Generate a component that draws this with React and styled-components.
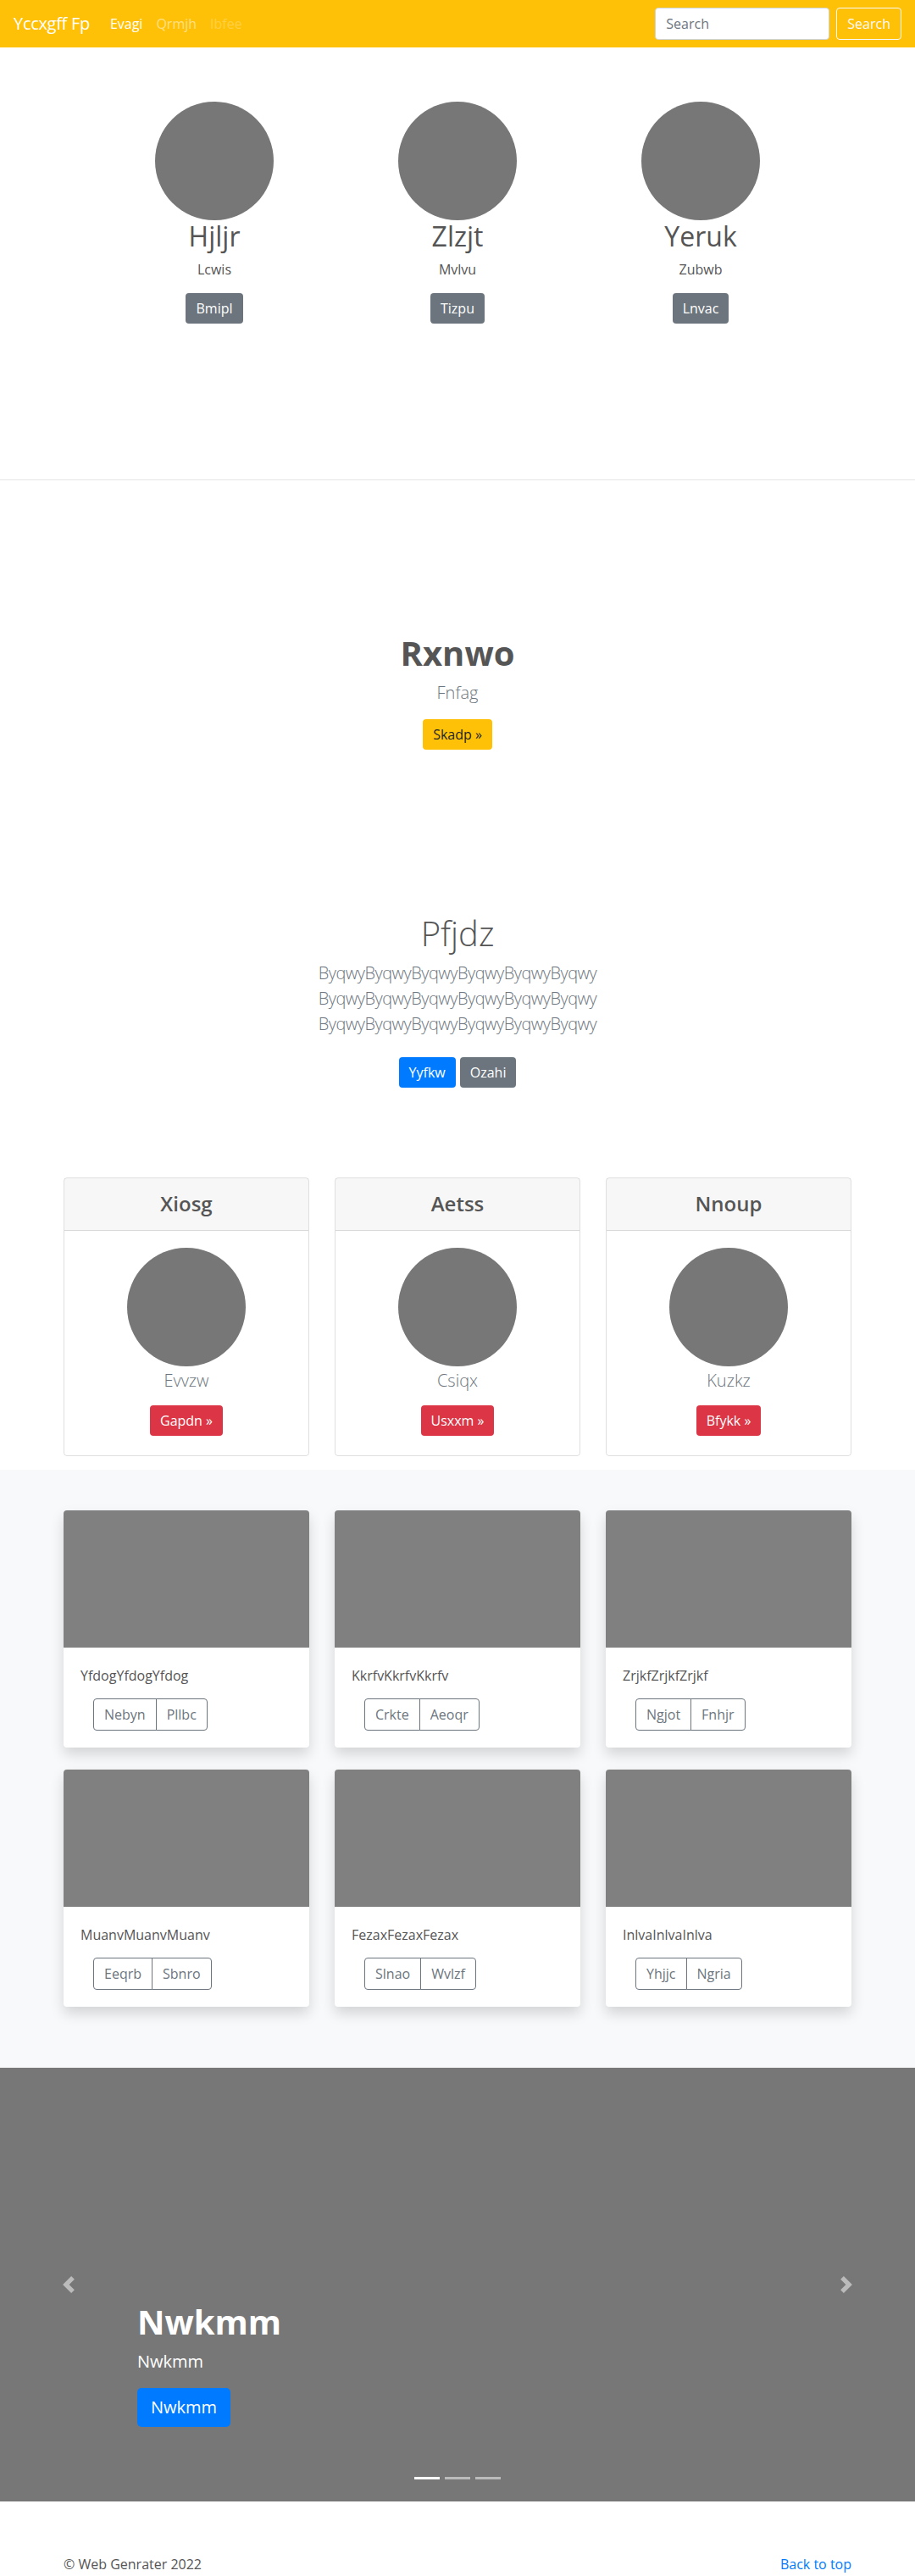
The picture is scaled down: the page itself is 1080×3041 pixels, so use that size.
import React from "react";
import styled, { createGlobalStyle } from "styled-components";

const GlobalStyle = createGlobalStyle`
  * { box-sizing: border-box; }
  body {
    margin: 0;
    font-family: "Open Sans", "Noto Sans", "Liberation Sans", sans-serif;
    font-size: 16px;
    line-height: 1.5;
    color: #555;
    background: #fff;
  }
  h1, h2, h4, p { margin: 0; }
`;

const team = [
  { name: "Hjljr", role: "Lcwis", btn: "Bmipl" },
  { name: "Zlzjt", role: "Mvlvu", btn: "Tizpu" },
  { name: "Yeruk", role: "Zubwb", btn: "Lnvac" },
];

const plans = [
  { title: "Xiosg", sub: "Evvzw", btn: "Gapdn »" },
  { title: "Aetss", sub: "Csiqx", btn: "Usxxm »" },
  { title: "Nnoup", sub: "Kuzkz", btn: "Bfykk »" },
];

const album = [
  { text: "YfdogYfdogYfdog", a: "Nebyn", b: "Pllbc" },
  { text: "KkrfvKkrfvKkrfv", a: "Crkte", b: "Aeoqr" },
  { text: "ZrjkfZrjkfZrjkf", a: "Ngjot", b: "Fnhjr" },
  { text: "MuanvMuanvMuanv", a: "Eeqrb", b: "Sbnro" },
  { text: "FezaxFezaxFezax", a: "Slnao", b: "Wvlzf" },
  { text: "InlvaInlvaInlva", a: "Yhjjc", b: "Ngria" },
];

const App = () => {
  return (
    <>
      <GlobalStyle />
      <Navbar>
        <Brand>Yccxgff Fp</Brand>
        <NavLinks>
          <NavLink $state="active">Evagi</NavLink>
          <NavLink>Qrmjh</NavLink>
          <NavLink $state="disabled">Ibfee</NavLink>
        </NavLinks>
        <SearchForm>
          <SearchInput placeholder="Search" />
          <SearchButton>Search</SearchButton>
        </SearchForm>
      </Navbar>

      <TeamSection>
        <TeamRow>
          {team.map((t) => (
            <TeamCol key={t.name}>
              <Circle />
              <TeamName>{t.name}</TeamName>
              <TeamRole>{t.role}</TeamRole>
              <Button $variant="secondary">{t.btn}</Button>
            </TeamCol>
          ))}
        </TeamRow>
      </TeamSection>

      <HeroSection>
        <HeroTitle>Rxnwo</HeroTitle>
        <Lead>Fnfag</Lead>
        <Button $variant="warning">Skadp »</Button>
      </HeroSection>

      <IntroSection>
        <IntroTitle>Pfjdz</IntroTitle>
        <IntroText>
          ByqwyByqwyByqwyByqwyByqwyByqwy
          <br />
          ByqwyByqwyByqwyByqwyByqwyByqwy
          <br />
          ByqwyByqwyByqwyByqwyByqwyByqwy
        </IntroText>
        <ButtonRow>
          <Button $variant="primary">Yyfkw</Button>
          <Button $variant="secondary">Ozahi</Button>
        </ButtonRow>
      </IntroSection>

      <Container>
        <PlanGrid>
          {plans.map((p) => (
            <PlanCard key={p.title}>
              <PlanHeader>
                <PlanTitle>{p.title}</PlanTitle>
              </PlanHeader>
              <PlanBody>
                <Circle />
                <PlanSub>{p.sub}</PlanSub>
                <Button $variant="danger">{p.btn}</Button>
              </PlanBody>
            </PlanCard>
          ))}
        </PlanGrid>
      </Container>

      <AlbumSection>
        <Container>
          <AlbumGrid>
            {album.map((c) => (
              <AlbumCard key={c.text}>
                <Thumb />
                <AlbumBody>
                  <AlbumText>{c.text}</AlbumText>
                  <BtnGroup>
                    <OutlineBtn>{c.a}</OutlineBtn>
                    <OutlineBtn>{c.b}</OutlineBtn>
                  </BtnGroup>
                </AlbumBody>
              </AlbumCard>
            ))}
          </AlbumGrid>
        </Container>
      </AlbumSection>

      <Carousel>
        <Control $side="left">
          <svg width="20" height="20" viewBox="0 0 8 8" fill="#fff">
            <path d="M5.25 0l-4 4 4 4 1.5-1.5L4.25 4l2.5-2.5L5.25 0z" />
          </svg>
        </Control>
        <Control $side="right">
          <svg width="20" height="20" viewBox="0 0 8 8" fill="#fff">
            <path d="M2.75 0l-1.5 1.5L3.75 4l-2.5 2.5L2.75 8l4-4-4-4z" />
          </svg>
        </Control>
        <Caption>
          <CaptionTitle>Nwkmm</CaptionTitle>
          <CaptionText>Nwkmm</CaptionText>
          <BigButton>Nwkmm</BigButton>
        </Caption>
        <Indicators>
          <Indicator $active />
          <Indicator />
          <Indicator />
        </Indicators>
      </Carousel>

      <Footer>
        <Container>
          <FooterRow>
            <span>© Web Genrater 2022</span>
            <TopLink href="#">Back to top</TopLink>
          </FooterRow>
        </Container>
      </Footer>
    </>
  );
};

export default App;

const Navbar = styled.nav`
  height: 56px;
  background: #ffc107;
  display: flex;
  align-items: center;
  padding: 0 16px;
`;

const Brand = styled.a`
  font-size: 20px;
  color: #fff;
  margin-right: 16px;
  line-height: 30px;
  letter-spacing: -0.3px;
`;

const NavLinks = styled.div`
  display: flex;
  flex: 1;
`;

const NavLink = styled.a`
  padding: 8px;
  color: ${(p) =>
    p.$state === "active"
      ? "#fff"
      : p.$state === "disabled"
      ? "rgba(255,255,255,.25)"
      : "rgba(255,255,255,.5)"};
`;

const SearchForm = styled.form`
  display: flex;
  gap: 8px;
`;

const SearchInput = styled.input`
  width: 206px;
  height: 38px;
  padding: 6px 12px;
  font: inherit;
  color: #495057;
  border: 1px solid #ced4da;
  border-radius: 4px;
  &::placeholder { color: #6c757d; }
`;

const SearchButton = styled.button`
  height: 38px;
  padding: 6px 12px;
  font: inherit;
  color: #f8f9fa;
  background: transparent;
  border: 1px solid #f8f9fa;
  border-radius: 4px;
`;

const colors = {
  primary: ["#007bff", "#fff"],
  secondary: ["#6c757d", "#fff"],
  warning: ["#ffc107", "#212529"],
  danger: ["#dc3545", "#fff"],
};

const Button = styled.a`
  display: inline-block;
  padding: 6px 12px;
  line-height: 24px;
  font-size: 16px;
  border-radius: 4px;
  background: ${(p) => colors[p.$variant][0]};
  color: ${(p) => colors[p.$variant][1]};
`;

const Circle = styled.div`
  width: 140px;
  height: 140px;
  border-radius: 50%;
  background: #777;
`;

const TeamSection = styled.section`
  height: 511px;
  padding-top: 64px;
  border-bottom: 1px solid #e5e5e5;
`;

const TeamRow = styled.div`
  width: 861px;
  margin: 0 auto;
  display: grid;
  grid-template-columns: repeat(3, 1fr);
`;

const TeamCol = styled.div`
  display: flex;
  flex-direction: column;
  align-items: center;
  text-align: center;
`;

const TeamName = styled.h2`
  font-size: 32px;
  font-weight: 400;
  line-height: 1.2;
  margin-bottom: 8px;
`;

const TeamRole = styled.p`
  margin-bottom: 16px;
`;

const HeroSection = styled.section`
  padding-top: 180px;
  display: flex;
  flex-direction: column;
  align-items: center;
`;

const HeroTitle = styled.h1`
  font-size: 40px;
  font-weight: 700;
  line-height: 1.2;
  margin-bottom: 8px;
`;

const Lead = styled.p`
  font-size: 20px;
  font-weight: 300;
  line-height: 1.5;
  color: #6c757d;
  margin-bottom: 16px;
`;

const IntroSection = styled.section`
  padding-top: 193px;
  display: flex;
  flex-direction: column;
  align-items: center;
  text-align: center;
`;

const IntroTitle = styled.h1`
  font-size: 40px;
  font-weight: 300;
  line-height: 1.2;
  margin-bottom: 8px;
`;

const IntroText = styled(Lead)`
  margin-bottom: 24px;
  letter-spacing: -0.5px;
`;

const ButtonRow = styled.div`
  display: flex;
  gap: 5px;
`;

const Container = styled.div`
  width: 960px;
  margin: 0 auto;
  padding: 0 15px;
`;

const PlanGrid = styled.div`
  margin-top: 106px;
  display: grid;
  grid-template-columns: repeat(3, 290px);
  column-gap: 30px;
  padding-bottom: 16px;
`;

const PlanCard = styled.div`
  border: 1px solid rgba(0, 0, 0, 0.125);
  border-radius: 4px;
  height: 329px;
`;

const PlanHeader = styled.div`
  height: 62px;
  background: rgba(0, 0, 0, 0.03);
  border-bottom: 1px solid rgba(0, 0, 0, 0.125);
  display: flex;
  align-items: center;
  justify-content: center;
`;

const PlanTitle = styled.h4`
  font-size: 24px;
  font-weight: 600;
  line-height: 1.2;
`;

const PlanBody = styled.div`
  padding-top: 20px;
  display: flex;
  flex-direction: column;
  align-items: center;
`;

const PlanSub = styled(Lead)`
  line-height: 30px;
  margin: 2px 0 14px;
`;

const AlbumSection = styled.section`
  background: #f8f9fa;
  padding: 48px 0;
`;

const AlbumGrid = styled.div`
  display: grid;
  grid-template-columns: repeat(3, 290px);
  column-gap: 30px;
  row-gap: 26px;
  padding-bottom: 24px;
`;

const AlbumCard = styled.div`
  background: #fff;
  border-radius: 4px;
  overflow: hidden;
  height: 280px;
  box-shadow: 0 8px 16px rgba(0, 0, 0, 0.15);
`;

const Thumb = styled.div`
  height: 162px;
  background: #808080;
`;

const AlbumBody = styled.div`
  padding: 21px 20px 20px;
`;

const AlbumText = styled.p`
  margin-bottom: 15px;
`;

const BtnGroup = styled.div`
  display: inline-flex;
  margin-left: 15px;
`;

const OutlineBtn = styled.button`
  font: inherit;
  height: 38px;
  padding: 6px 12px;
  color: #6c757d;
  background: transparent;
  border: 1px solid #6c757d;
  &:first-child { border-radius: 4px 0 0 4px; }
  &:last-child { border-radius: 0 4px 4px 0; margin-left: -1px; }
`;

const Carousel = styled.section`
  position: relative;
  height: 512px;
  background: #777;
`;

const Control = styled.div`
  position: absolute;
  top: 0;
  bottom: 0;
  ${(p) => p.$side}: 0;
  width: 15%;
  display: flex;
  align-items: center;
  justify-content: center;
  opacity: 0.5;
`;

const Caption = styled.div`
  position: absolute;
  left: 15%;
  right: 15%;
  bottom: 88px;
  color: #fff;
`;

const CaptionTitle = styled.h1`
  font-size: 40px;
  font-weight: 700;
  line-height: 1.2;
  margin-bottom: 8px;
`;

const CaptionText = styled.p`
  font-size: 20px;
  margin-bottom: 16px;
`;

const BigButton = styled.a`
  display: inline-block;
  padding: 8px 16px;
  font-size: 20px;
  line-height: 30px;
  border-radius: 5px;
  background: #007bff;
  color: #fff;
`;

const Indicators = styled.div`
  position: absolute;
  left: 0;
  right: 0;
  bottom: 26px;
  display: flex;
  justify-content: center;
  gap: 6px;
`;

const Indicator = styled.span`
  width: 30px;
  height: 3px;
  background: #fff;
  opacity: ${(p) => (p.$active ? 1 : 0.5)};
`;

const Footer = styled.footer`
  padding-top: 62px;
  height: 89px;
`;

const FooterRow = styled.div`
  display: flex;
  justify-content: space-between;
`;

const TopLink = styled.a`
  color: #007bff;
  text-decoration: none;
`;
